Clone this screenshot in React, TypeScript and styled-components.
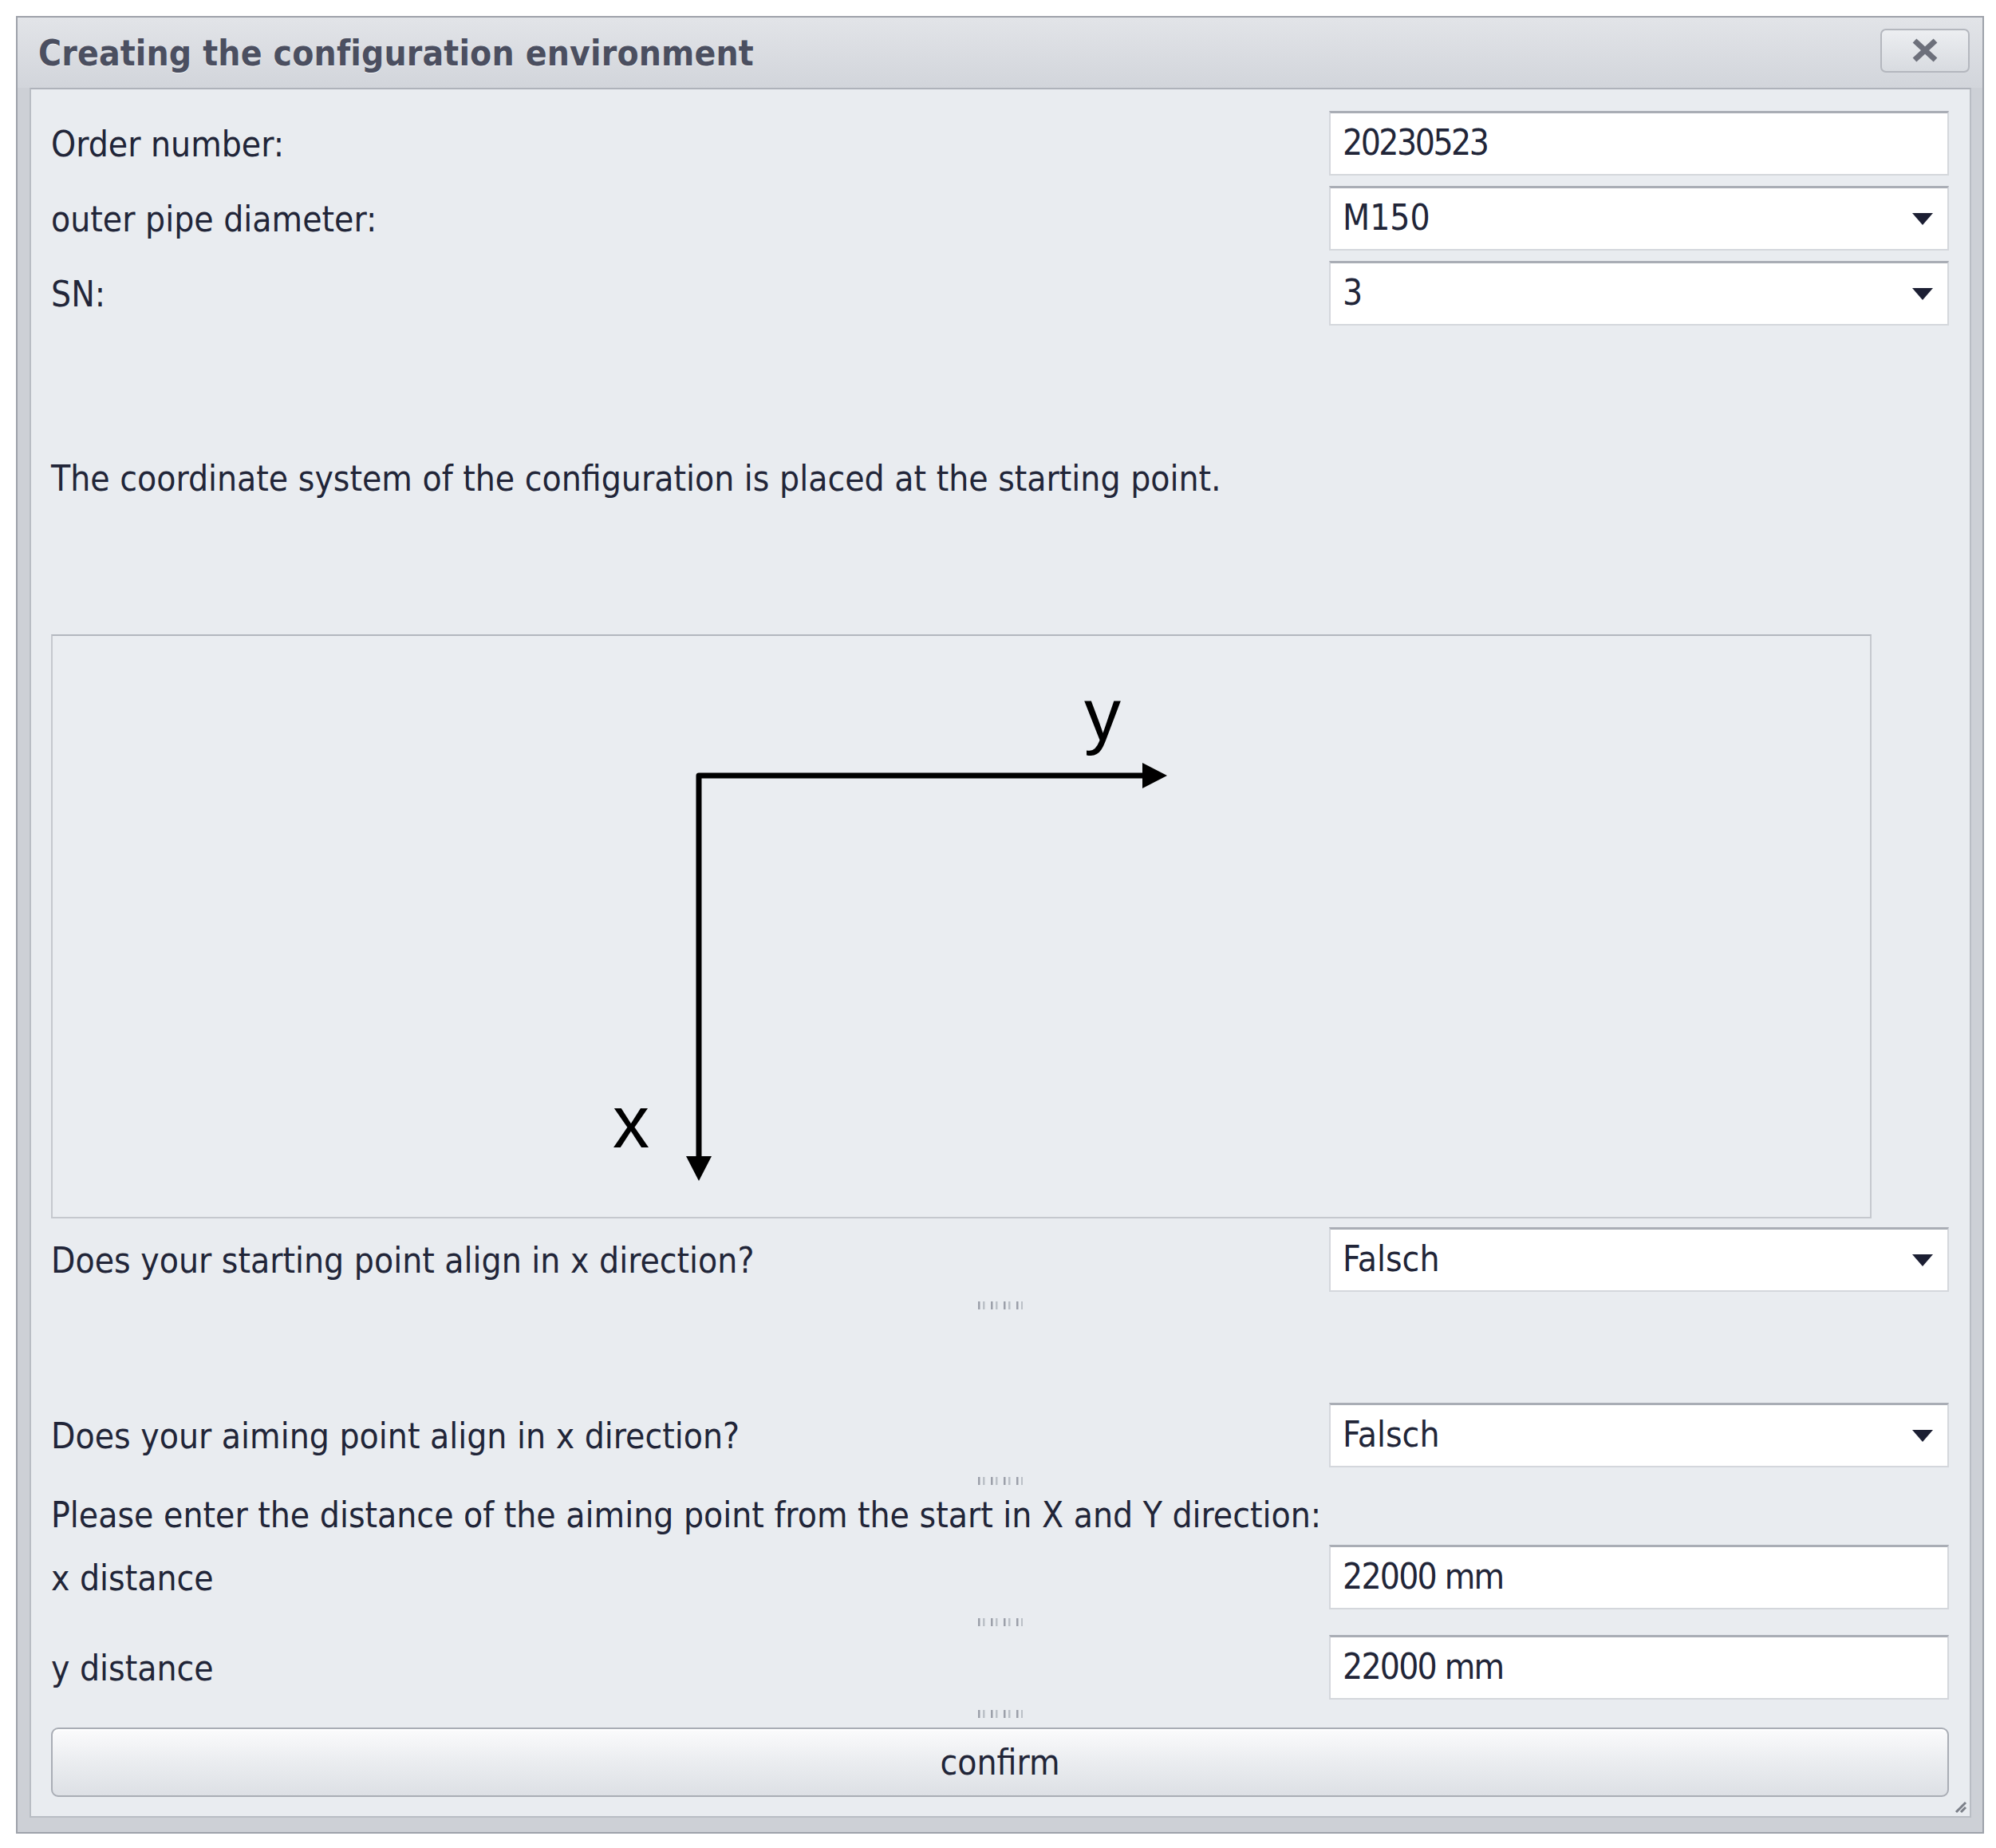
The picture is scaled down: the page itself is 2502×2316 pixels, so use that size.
import React from "react";
import styled, { createGlobalStyle } from "styled-components";

const GlobalStyle = createGlobalStyle`
  html, body {
    margin: 0;
    padding: 0;
    background: #ffffff;
  }
  body {
    font-family: "DejaVu Sans Condensed", "DejaVu Sans", sans-serif;
    color: #212538;
  }
`;

const Page = styled.div`
  padding: 20px 0 0 20px;
`;

const Window = styled.section`
  box-sizing: border-box;
  width: 2467px;
  height: 2278px;
  border: 2px solid #9ea2aa;
  background: #cdd0d6;
  display: flex;
  flex-direction: column;
`;

const TitleBar = styled.header`
  height: 88px;
  flex: none;
  display: flex;
  align-items: center;
  justify-content: space-between;
  padding: 0 16px 0 26px;
  background: linear-gradient(#e2e4e8, #d2d5db);
`;

const Title = styled.h1`
  margin: 0;
  font-size: 44px;
  font-weight: bold;
  color: #4b4f60;
  text-shadow: 0 1px 0 rgba(255, 255, 255, 0.7);
  letter-spacing: 0.15px;
`;

const CloseButton = styled.button`
  box-sizing: border-box;
  width: 112px;
  height: 55px;
  margin-top: -6px;
  border: 2px solid #b4b7be;
  border-radius: 7px;
  background: linear-gradient(#eceef1, #d8dbe0);
  display: flex;
  align-items: center;
  justify-content: center;
  padding: 0;
`;

const Frame = styled.div`
  flex: 1;
  display: flex;
  padding: 0 14px 18px 15px;
`;

const Content = styled.main`
  position: relative;
  flex: 1;
  display: flex;
  flex-direction: column;
  border: 2px solid #b9bdc4;
  border-top-color: #aeb2ba;
  background: #e9ecf0;
  padding: 0 26px 24px 25px;
`;

const Row = styled.div<{ $mt: number }>`
  margin-top: ${(p) => p.$mt}px;
  display: grid;
  grid-template-columns: 1fr 777px;
  align-items: center;
  height: 81px;
`;

const Label = styled.span`
  font-size: 44px;
  line-height: 54px;
  padding-top: 2px;
  white-space: nowrap;
`;

const Field = styled.div`
  box-sizing: border-box;
  height: 81px;
  background: #ffffff;
  border: 2px solid #d4d7dc;
  border-top: 3px solid #a9adb5;
  padding: 0 18px 0 15px;
  display: flex;
  align-items: center;
  justify-content: space-between;
  font-size: 44px;
`;

const Value = styled.span<{ $tracking: number }>`
  letter-spacing: ${(p) => p.$tracking}px;
  margin-top: -3px;
`;

const Text = styled.p<{ $mt: number }>`
  margin: ${(p) => p.$mt}px 0 0;
  font-size: 44px;
  line-height: 54px;
  white-space: nowrap;
`;

const Picture = styled.div<{ $mt: number }>`
  margin-top: ${(p) => p.$mt}px;
  box-sizing: border-box;
  width: 2282px;
  height: 732px;
  border: 2px solid #c5c8ce;
  border-top-color: #b3b7be;
  background: #eaedf1;
  display: flex;
`;

const Splitter = styled.div<{ $mt: number }>`
  margin-top: ${(p) => p.$mt}px;
  height: 14px;
  display: flex;
  justify-content: center;
  align-items: center;
`;

const ConfirmButton = styled.button<{ $mt: number }>`
  margin-top: ${(p) => p.$mt}px;
  box-sizing: border-box;
  height: 87px;
  width: 100%;
  border: 2px solid #a9adb5;
  border-radius: 9px;
  background: linear-gradient(#fbfbfc, #eceef1 45%, #dde0e5);
  box-shadow: inset 0 2px 0 #ffffff;
  font-family: inherit;
  font-size: 44px;
  color: #212538;
  padding: 0;
`;

const Grip = styled.svg`
  position: absolute;
  right: 3px;
  bottom: 3px;
`;

const Arrow = () => (
  <svg width="26" height="15" viewBox="0 0 26 15">
    <polygon points="0,0 26,0 13,15" fill="#1c1f33" />
  </svg>
);

const Dots = () => (
  <svg width="56" height="12" viewBox="0 0 56 12">
    {[0, 6, 16, 22, 32, 38, 48, 54].map((x) => (
      <rect key={x} x={x} y="1" width="2.5" height="10" fill="#8e939d" opacity={x % 16 === 0 ? 0.85 : 0.5} />
    ))}
  </svg>
);

const Axes = () => (
  <svg width="2278" height="728" viewBox="0 0 2278 728">
    <path
      d="M810 656 L810 175 L1370 175"
      fill="none"
      stroke="#000"
      strokeWidth="7"
      strokeLinejoin="round"
    />
    <polygon points="1366,159 1397,175 1366,191" fill="#000" />
    <polygon points="794,652 810,683 826,652" fill="#000" />
    <text x="1316" y="131" fontFamily="Liberation Sans, Arial, sans-serif" fontSize="92" textAnchor="middle" fill="#000">
      y
    </text>
    <text x="725" y="641" fontFamily="Liberation Sans, Arial, sans-serif" fontSize="92" textAnchor="middle" fill="#000">
      x
    </text>
  </svg>
);

type FormRowProps = { mt: number; label: string; value: string; select?: boolean; tracking?: number };

const FormRow = ({ mt, label, value, select, tracking = 0 }: FormRowProps) => (
  <Row $mt={mt}>
    <Label>{label}</Label>
    <Field>
      <Value $tracking={tracking}>{value}</Value>
      {select && <Arrow />}
    </Field>
  </Row>
);

export default function App() {
  return (
    <Page>
      <GlobalStyle />
      <Window>
        <TitleBar>
          <Title>Creating the configuration environment</Title>
          <CloseButton aria-label="close">
            <svg width="34" height="30" viewBox="0 0 34 30">
              <path d="M4 3 L30 27 M30 3 L4 27" stroke="#6d707b" strokeWidth="7" strokeLinecap="butt" />
            </svg>
          </CloseButton>
        </TitleBar>
        <Frame>
          <Content>
            <FormRow mt={27} label="Order number:" value="20230523" tracking={-2.5} />
            <FormRow mt={13} label="outer pipe diameter:" value="M150" select />
            <FormRow mt={13} label="SN:" value="3" select />
            <Text $mt={165}>The coordinate system of the configuration is placed at the starting point.</Text>
            <Picture $mt={168}>
              <Axes />
            </Picture>
            <FormRow mt={11} label="Does your starting point align in x direction?" value="Falsch" select />
            <Splitter $mt={10}>
              <Dots />
            </Splitter>
            <FormRow mt={115} label="Does your aiming point align in x direction?" value="Falsch" select />
            <Splitter $mt={10}>
              <Dots />
            </Splitter>
            <Text $mt={9}>Please enter the distance of the aiming point from the start in X and Y direction:</Text>
            <FormRow mt={10} label="x distance" value="22000 mm" tracking={-1.8} />
            <Splitter $mt={9}>
              <Dots />
            </Splitter>
            <FormRow mt={9} label="y distance" value="22000 mm" tracking={-1.8} />
            <Splitter $mt={11}>
              <Dots />
            </Splitter>
            <ConfirmButton $mt={10}>confirm</ConfirmButton>
            <Grip width="18" height="18" viewBox="0 0 18 18">
              <path d="M16 4 L4 16 M16 10 L10 16" stroke="#7c8089" strokeWidth="3" />
            </Grip>
          </Content>
        </Frame>
      </Window>
    </Page>
  );
}
